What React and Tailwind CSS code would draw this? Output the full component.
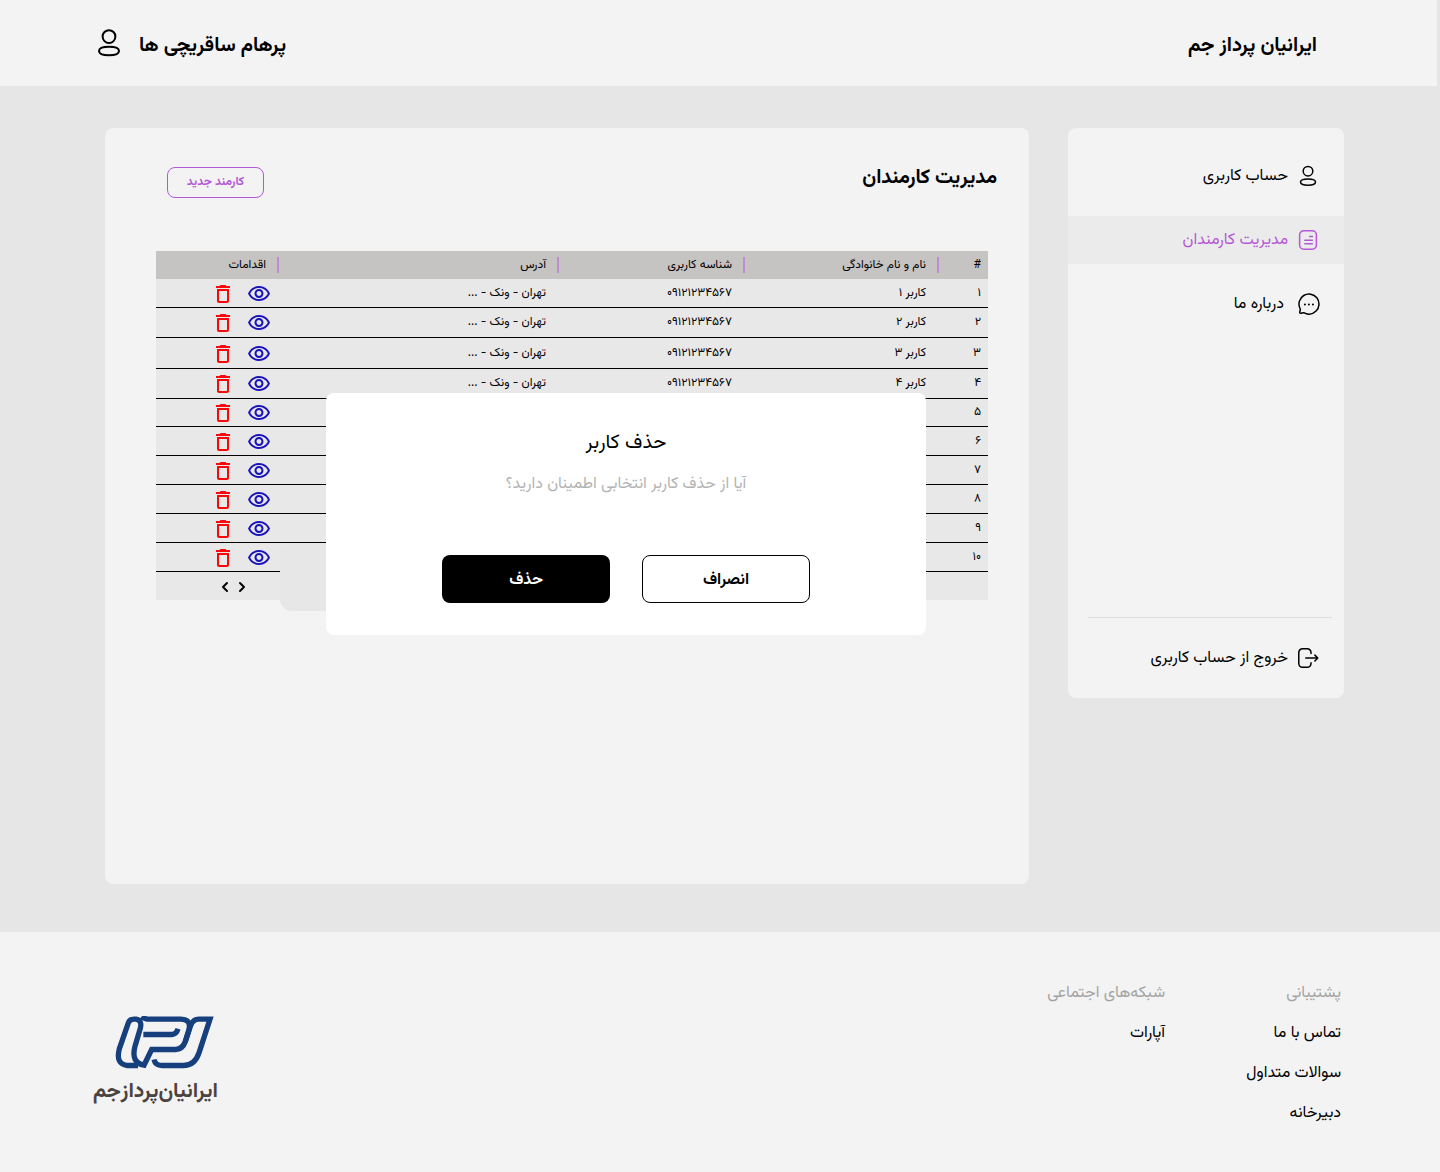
import { MdDeleteOutline, MdOutlineVisibility } from "react-icons/md";
import { FiChevronLeft, FiChevronRight } from "react-icons/fi";

const user = { phone: "۰۹۱۲۱۲۳۴۵۶۷", address: "تهران - ونک - ..." };

const rows = [
  { n: "۱", h: "h-[28px]", name: "کاربر ۱", ...user },
  { n: "۲", h: "h-[30px]", name: "کاربر ۲", ...user },
  { n: "۳", h: "h-[31px]", name: "کاربر ۳", ...user },
  { n: "۴", h: "h-[30px]", name: "کاربر ۴", ...user },
  { n: "۵", h: "h-[28px]" },
  { n: "۶", h: "h-[29px]" },
  { n: "۷", h: "h-[29px]" },
  { n: "۸", h: "h-[29px]" },
  { n: "۹", h: "h-[29px]" },
  { n: "۱۰", h: "h-[29px]" },
];

function Icon({ className = "size-6", children }) {
  return (
    <svg
      viewBox="0 0 24 24"
      fill="none"
      stroke="currentColor"
      strokeWidth="1.5"
      strokeLinecap="round"
      strokeLinejoin="round"
      aria-hidden="true"
      className={`shrink-0 ${className}`}
    >
      {children}
    </svg>
  );
}

function UserIcon({ className }) {
  return (
    <Icon className={className}>
      <circle cx="12" cy="7.2" r="4.8" />
      <path d="M12 14.9c4.6 0 7.5 1 7.5 3.1s-2.9 3.2-7.5 3.2-7.5-1.1-7.5-3.2 2.9-3.1 7.5-3.1Z" />
    </Icon>
  );
}

function DocumentIcon() {
  return (
    <Icon>
      <rect x="3.6" y="2.75" width="16.8" height="18.5" rx="4.2" />
      <path d="M13.6 8.6h2.8M8.8 12.2h7.6M8.8 15.8h7.6" />
    </Icon>
  );
}

function ChatIcon() {
  return (
    <Icon>
      <path d="M20.07 19.07c-3.06 3.06-7.58 3.72-11.28 2-.55-.21-1-.39-1.43-.39-1.18 0-2.66 1.16-3.43.39-.77-.77.39-2.25.39-3.44 0-.43-.18-.87-.4-1.42A10 10 0 1 1 20.07 19.07Z" />
      <path strokeWidth="2" d="M16.9 12.4h.01M12.9 12.4h.01M8.9 12.4h.01" />
    </Icon>
  );
}

function LogoutIcon() {
  return (
    <Icon>
      <path d="M15.02 7.39v-.93a3.68 3.68 0 0 0-3.69-3.69H6.46a3.69 3.69 0 0 0-3.69 3.69v11.13a3.69 3.69 0 0 0 3.69 3.68h4.88a3.67 3.67 0 0 0 3.68-3.67v-.95" />
      <path d="M21.81 12.02H9.77M18.88 9.11l2.93 2.91-2.93 2.92" />
    </Icon>
  );
}

function LogoMark() {
  return (
    <svg viewBox="135 48 300 158" fill="none" stroke="#163f7d" strokeWidth="16" aria-hidden="true" className="h-[53px] w-[100px]">
      <path d="M204 196H172Q136 192 148 146L175 68Q179 57 192 57H198Q217 61 211 84L195 138Q182 188 222 195L245 148H316Q338 147 346 124L357 88Q364 57 332 57H238Q224 57 215 49" />
      <path d="M220 103H306Q319 103 324 86" />
      <path d="M346 124L362 76Q369 57 386 57H420L387 158Q374 196 340 196H276Q256 196 252 178" />
    </svg>
  );
}

function NavItem({ icon, label, active, gap = "gap-2" }) {
  return (
    <li>
      <a
        href="#"
        aria-current={active ? "page" : undefined}
        className={`flex h-12 items-center px-6 ${gap} ${active ? "bg-[#ebebeb] text-[#b558d6]" : "text-black"}`}
      >
        {icon}
        <span className="pt-0.5">{label}</span>
      </a>
    </li>
  );
}

function HeadCell({ children }) {
  return (
    <th scope="col" className="p-0 font-normal">
      <div className="flex items-center gap-[11px]">
        <span className="h-4 w-0.5 bg-[#be8dd0]" />
        {children}
      </div>
    </th>
  );
}

function FooterColumn({ title, links }) {
  return (
    <nav>
      <h2 className="text-[#a3a3a3]">{title}</h2>
      <ul>
        {links.map((link) => (
          <li key={link} className="mt-4">
            <a href="#">{link}</a>
          </li>
        ))}
      </ul>
    </nav>
  );
}

export default function App() {
  return (
    <div dir="rtl" lang="fa" className="flex min-h-screen flex-col bg-[#e6e6e6] font-['Vazirmatn','Noto_Sans',sans-serif] text-base text-black">
      <header className="mr-[3px] flex h-[86px] items-center justify-between bg-[#f3f3f3] pr-[120px] pl-[93px] text-xl font-bold">
        <h1 className="pt-1.5">ایرانیان پرداز جم</h1>
        <div className="flex items-center gap-[14px]">
          <span className="pt-1.5">پرهام ساقریچی ها</span>
          <UserIcon className="size-8" />
        </div>
      </header>

      <main className="flex grow items-start gap-[39px] pt-[42px] pr-24 pb-12 pl-[105px]">
        <aside className="flex min-h-[570px] w-[276px] shrink-0 flex-col rounded-lg bg-[#f3f3f3] pt-6 pb-4">
          <ul className="flex flex-col gap-4">
            <NavItem icon={<UserIcon />} label="حساب کاربری" />
            <NavItem icon={<DocumentIcon />} label="مدیریت کارمندان" active />
            <NavItem icon={<ChatIcon />} label="درباره ما" gap="gap-3" />
          </ul>
          <div className="mt-auto mr-3 ml-5 border-t border-[#dcdcdc]" />
          <ul className="pt-4">
            <NavItem icon={<LogoutIcon />} label="خروج از حساب کاربری" />
          </ul>
        </aside>

        <section className="relative min-h-[756px] min-w-0 grow rounded-lg bg-[#f3f3f3] pt-[31px] pr-[41px] pl-[51px]">
          <div className="-mr-[9px] flex items-center justify-between pl-[11px]">
            <h2 className="pb-0.5 text-xl font-bold">مدیریت کارمندان</h2>
            <button type="button" className="mt-2 h-[31px] w-[97px] rounded-lg border border-[#b558d6] pb-0.5 text-xs font-bold text-[#b558d6]">
              کارمند جدید
            </button>
          </div>

          <table className="mt-[53px] w-full table-fixed border-collapse bg-[#e8e8e8] text-right text-xs">
            <colgroup>
              <col className="w-[49px]" />
              <col className="w-[194px]" />
              <col className="w-[186px]" />
              <col />
              <col className="w-[123px]" />
            </colgroup>
            <thead>
              <tr className="h-7 bg-[#c6c4c2]">
                <th scope="col" className="py-0 pr-[7px] pl-0 font-normal">#</th>
                <HeadCell>نام و نام خانوادگی</HeadCell>
                <HeadCell>شناسه کاربری</HeadCell>
                <HeadCell>آدرس</HeadCell>
                <HeadCell>اقدامات</HeadCell>
              </tr>
            </thead>
            <tbody>
              {rows.map(({ n, h, name, phone, address }) => (
                <tr key={n} className={`border-b border-black ${h}`}>
                  <td className="py-0 pr-[7px] pl-0">{n}</td>
                  <td className="py-0 pr-[13px] pl-0">{name}</td>
                  <td className="py-0 pr-[13px] pl-0">{phone}</td>
                  <td className="py-0 pr-[13px] pl-0">{address}</td>
                  <td className="pt-0.5 pr-2 pb-0 pl-0">
                    <div className="flex items-center gap-3">
                      <button type="button" aria-label="مشاهده" className="text-[#1a13b8]">
                        <MdOutlineVisibility className="size-6" />
                      </button>
                      <button type="button" aria-label="حذف" className="text-[#f80808]">
                        <MdDeleteOutline className="size-6" />
                      </button>
                    </div>
                  </td>
                </tr>
              ))}
            </tbody>
            <tfoot>
              <tr className="h-[29px]">
                <td colSpan={4} className="p-0" />
                <td className="pt-0.5 pr-[29px] pb-0 pl-0">
                  <div className="flex items-center">
                    <button type="button" aria-label="صفحه قبل" className="flex w-[17px] justify-center">
                      <FiChevronRight className="size-4" strokeWidth="3" />
                    </button>
                    <button type="button" aria-label="صفحه بعد" className="flex w-[17px] justify-center">
                      <FiChevronLeft className="size-4" strokeWidth="3" />
                    </button>
                  </div>
                </td>
              </tr>
            </tfoot>
          </table>

          <div className="absolute top-[416px] left-[175px] h-[67px] w-24 rounded-xl bg-[#e7e7e7]" />
          <div
            role="dialog"
            aria-labelledby="dialog-title"
            aria-describedby="dialog-text"
            className="absolute top-[265px] left-[221px] flex w-[600px] flex-col items-center rounded-lg bg-white pt-[34px] pb-8"
          >
            <h3 id="dialog-title" className="text-xl/8">حذف کاربر</h3>
            <p id="dialog-text" className="mt-3.5 text-[#b3b3b3]">آیا از حذف کاربر انتخابی اطمینان دارید؟</p>
            <div className="mt-[58px] flex gap-8 font-bold">
              <button type="button" className="h-12 w-[168px] rounded-lg border border-black pt-1">انصراف</button>
              <button type="button" className="h-12 w-[168px] rounded-lg bg-black pt-1 text-white">حذف</button>
            </div>
          </div>
        </section>
      </main>

      <footer className="flex min-h-60 items-start justify-between bg-[#f3f3f3] pt-[50px] pr-[99px] pl-[93px]">
        <div className="flex">
          <div className="w-44">
            <FooterColumn title="پشتیبانی" links={["تماس با ما", "سوالات متداول", "دبیرخانه"]} />
          </div>
          <FooterColumn title="شبکه‌های اجتماعی" links={["آپارات"]} />
        </div>
        <a href="#" className="mt-[34px] flex flex-col items-start">
          <span className="pr-[3px]">
            <LogoMark />
          </span>
          <span className="mt-[7px] flex text-[21px]/8 font-bold text-[#4b423f]">
            <span>ایرانیان</span>
            <span>پرداز</span>
            <span>جم</span>
          </span>
        </a>
      </footer>
    </div>
  );
}
